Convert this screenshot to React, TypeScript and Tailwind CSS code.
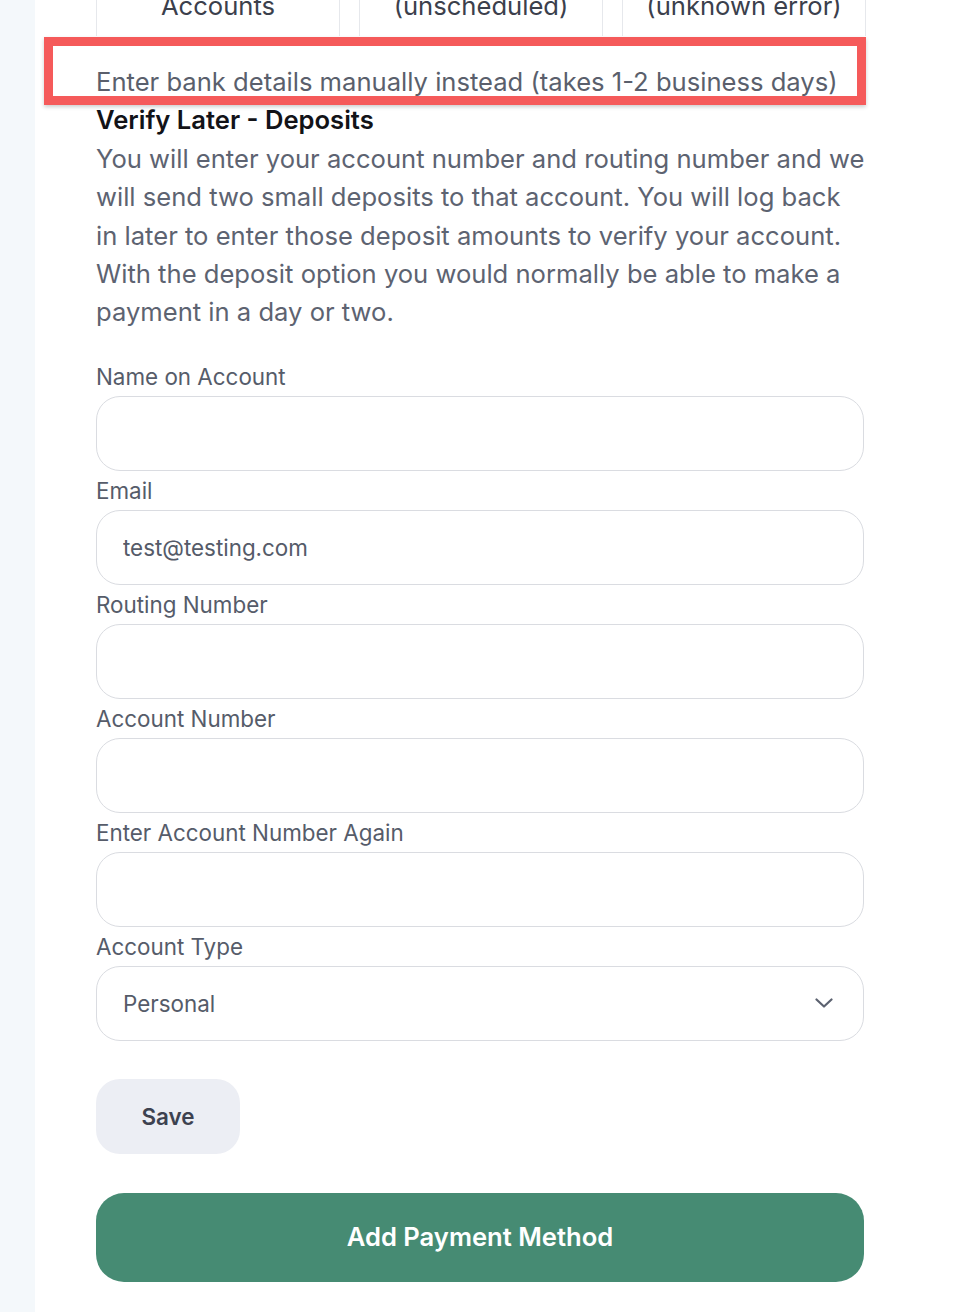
import React from "react";

const labelCls = "block text-[22.4px] leading-[39px] text-[#565c6a]";
const inputCls =
  "w-[768px] h-[75px] rounded-[24px] border border-[#dadce1] bg-white px-[26px] text-[22.4px] text-[#555b69] outline-none";

function Field({ label, value }: { label: string; value?: string }) {
  return (
    <div>
      <label className={labelCls}>{label}</label>
      <input className={inputCls} defaultValue={value ?? ""} />
    </div>
  );
}

export default function App() {
  return (
    <div
      className="flex min-h-[1312px] w-full bg-white"
      style={{ fontFamily: "Inter, 'Noto Sans', sans-serif" }}
    >
      <div className="w-[35px] shrink-0 bg-[#f4f8fb]" />
      <div className="relative flex-1 bg-white">
        <div className="ml-[61px] w-[770px]">
          {/* tab cells (cut off at top) */}
          <div className="flex h-[36px] gap-[19px]">
            {["Accounts", "(unscheduled)", "(unknown error)"].map((t) => (
              <div
                key={t}
                className="flex h-[36px] flex-1 items-end justify-center border-x border-[#e6e8ec] pb-[15px]"
              >
                <span className="text-[25.6px] leading-[31px] text-[#3b404c] whitespace-nowrap">{t}</span>
              </div>
            ))}
          </div>

          <div className="mt-[27px] text-[25.6px] leading-[38.4px]">
            <p className="text-[#5a5f6c]">Enter bank details manually instead (takes 1-2 business days)</p>
            <h2 className="font-semibold text-[#121318]">Verify Later - Deposits</h2>
            <p className="text-[#5d6371]">
              You will enter your account number and routing number and we will send two small deposits to
              that account. You will log back in later to enter those deposit amounts to verify your account.
              With the deposit option you would normally be able to make a payment in a day or two.
            </p>
          </div>

          <div className="mt-[25px]">
            <Field label="Name on Account" />
            <Field label="Email" value="test@testing.com" />
            <Field label="Routing Number" />
            <Field label="Account Number" />
            <Field label="Enter Account Number Again" />
            <div>
              <label className={labelCls}>Account Type</label>
              <div className="relative flex h-[75px] w-[768px] items-center rounded-[24px] border border-[#dadce1] bg-white px-[26px]">
                <span className="text-[22.4px] text-[#555b69]">Personal</span>
                <svg
                  className="absolute right-[30px] top-1/2 -translate-y-1/2"
                  width="18"
                  height="10"
                  viewBox="0 0 18 10"
                  fill="none"
                >
                  <path d="M1.5 1.5 L9 8.5 L16.5 1.5" stroke="#5c6270" strokeWidth="2.2" strokeLinecap="round" strokeLinejoin="round" />
                </svg>
              </div>
            </div>
          </div>

          <button className="mt-[38px] flex h-[75px] w-[144px] items-center justify-center rounded-[24px] bg-[#eceef4] text-[22.4px] font-semibold text-[#3d4250]">
            Save
          </button>

          <button className="mt-[39px] flex h-[89px] w-[768px] items-center justify-center rounded-[28px] bg-[#468b73] text-[25.6px] font-semibold text-white">
            Add Payment Method
          </button>
        </div>

        {/* annotation box */}
        <div className="pointer-events-none absolute left-[9px] top-[37px] h-[68px] w-[822px] border-[9px] border-[#f55a5a] shadow-[0_2px_4px_rgba(0,0,0,0.2)]" />
      </div>
    </div>
  );
}
